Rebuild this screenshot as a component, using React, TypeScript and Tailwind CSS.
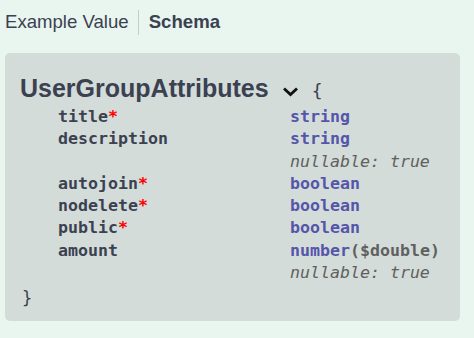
import React from 'react';

type Prop = { name: string; required?: boolean; type: string; format?: string; nullable?: boolean };

const props: Prop[] = [
  { name: 'title', required: true, type: 'string' },
  { name: 'description', type: 'string', nullable: true },
  { name: 'autojoin', required: true, type: 'boolean' },
  { name: 'nodelete', required: true, type: 'boolean' },
  { name: 'public', required: true, type: 'boolean' },
  { name: 'amount', type: 'number', format: '($double)', nullable: true },
];

const mono = "font-['DejaVu_Sans_Mono',monospace]";

export default function App() {
  return (
    <div className="w-[474px] h-[338px] bg-[#e9f5ef] overflow-hidden font-['Liberation_Sans',Arial,sans-serif]">
      <div className="flex items-center h-[44px] pl-[5px] text-[18.6px] text-[#3b4151]">
        <span>Example Value</span>
        <span className="ml-[9px] mr-[10px] w-px h-[25px] bg-[#c4ccc8]" />
        <span className="font-bold">Schema</span>
      </div>
      <div className="ml-[5px] mt-[9px] w-[455px] h-[268px] rounded-[5px] bg-[#d3dcd9] pl-[15px] pt-[20px]">
        <div className="flex items-center h-[32px] text-[#3b4151]">
          <span className="text-[25px] font-bold">UserGroupAttributes</span>
          <svg width="17" height="11" viewBox="0 0 17 11" className="ml-[13px] mt-[4px]">
            <path d="M2 2.5 L8.5 8.5 L15 2.5" fill="none" stroke="#111" strokeWidth="2.8" />
          </svg>
          <span className={`${mono} text-[18px] ml-[13px] mt-[2px]`}>{'{'}</span>
        </div>
        <div className={`${mono} text-[16.6px] leading-[22.3px] font-bold mt-[1px]`}>
          {props.map((p) => (
            <div key={p.name} className="flex">
              <div className="w-[270px] pl-[38px] text-[#3b4151]">
                {p.name}
                {p.required && <span className="text-[#f00]">*</span>}
              </div>
              <div>
                <div className="text-[#55a]">
                  {p.type}
                  {p.format && <span className="text-[#606060]">{p.format}</span>}
                </div>
                {p.nullable && <div className="italic font-normal text-[#606060]">nullable: true</div>}
              </div>
            </div>
          ))}
          <div className="pl-[2px] mt-[3px] text-[#3b4151] font-normal text-[17px]">{'}'}</div>
        </div>
      </div>
    </div>
  );
}
